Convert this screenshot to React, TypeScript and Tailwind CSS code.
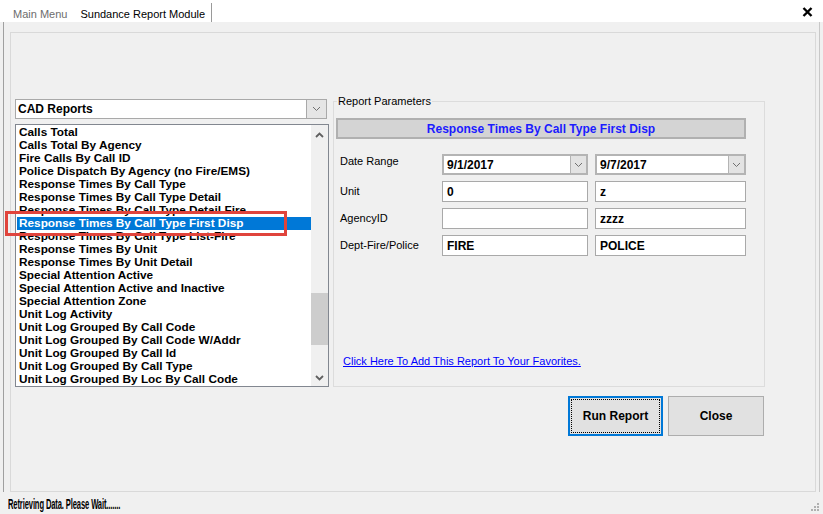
import React from 'react';

const reports = [
  'Calls Total',
  'Calls Total By Agency',
  'Fire Calls By Call ID',
  'Police Dispatch By Agency (no Fire/EMS)',
  'Response Times By Call Type',
  'Response Times By Call Type Detail',
  'Response Times By Call Type Detail Fire',
  'Response Times By Call Type First Disp',
  'Response Times By Call Type List-Fire',
  'Response Times By Unit',
  'Response Times By Unit Detail',
  'Special Attention Active',
  'Special Attention Active and Inactive',
  'Special Attention Zone',
  'Unit Log Activity',
  'Unit Log Grouped By Call Code',
  'Unit Log Grouped By Call Code W/Addr',
  'Unit Log Grouped By Call Id',
  'Unit Log Grouped By Call Type',
  'Unit Log Grouped By Loc By Call Code',
];

const selected = 'Response Times By Call Type First Disp';

const Chevron: React.FC<{ up?: boolean; bold?: boolean }> = ({ up, bold }) => (
  <svg width="9" height="6" viewBox="0 0 9 6">
    <path
      d={up ? 'M1 5 L4.5 1.5 L8 5' : 'M1 1 L4.5 4.5 L8 1'}
      fill="none"
      stroke={bold ? '#606060' : '#707070'}
      strokeWidth={bold ? 1.8 : 1}
    />
  </svg>
);

const TextBox: React.FC<{ value?: string; w: string }> = ({ value, w }) => (
  <div className={`${w} h-[21px] bg-white border border-[#a9a9a9] flex items-center pl-[4px] text-[12px] font-bold text-black`}>
    {value}
  </div>
);

const DateBox: React.FC<{ value: string; w: string }> = ({ value, w }) => (
  <div className={`${w} h-[21px] bg-white border-2 border-[#b4b4b4] flex items-center text-[12px] font-bold text-black`}>
    <span className="pl-[3px] flex-1">{value}</span>
    <div className="w-[16px] h-full bg-[#e3e3e3] border-l border-[#b4b4b4] flex items-center justify-center">
      <Chevron />
    </div>
  </div>
);

const Row: React.FC<{ label: string; shift?: boolean; children: React.ReactNode }> = ({ label, shift, children }) => (
  <div className="flex items-center h-[21px]">
    <div className={`w-[102px] text-[11px] text-black ${shift ? '-mt-[7px]' : ''}`}>{label}</div>
    <div className="flex gap-[7px]">{children}</div>
  </div>
);

export default function App() {
  return (
    <div
      className="w-[823px] h-[514px] bg-[#f0f0f0] flex flex-col overflow-hidden text-black"
      style={{ fontFamily: '"Liberation Sans", Arial, sans-serif' }}
    >
      {/* tab strip */}
      <div className="h-[22px] bg-white flex items-stretch shrink-0">
        <div className="pl-[13px] pt-[6px] text-[11px] text-[#6d6d6d]">Main Menu</div>
        <div className="ml-[7px] pl-[6px] pr-[6px] mt-[3px] pt-[3px] text-[11px] text-black border-r border-[#9a9a9a]">
          Sundance Report Module
        </div>
        <div className="ml-auto pr-[10px] pt-[7px]">
          <svg width="11" height="10" viewBox="0 0 11 10">
            <path d="M1.5 1 L9.5 9 M9.5 1 L1.5 9" stroke="#000" strokeWidth="2.4" />
          </svg>
        </div>
      </div>

      {/* body */}
      <div className="h-[470px] w-[817px] ml-[3px] border-l border-r border-[#c8c8c8] border-l-[#a0a0a0] flex flex-col shrink-0">
        <div className="ml-[6px] mt-[10px] w-[806px] h-[460px] border border-[#d9d9d9] pt-[66px] pl-[4px] flex gap-[4px]">
          {/* left column */}
          <div className="w-[314px] flex flex-col">
            <div className="w-[312px] h-[20px] bg-white border border-[#a9a9a9] flex items-center">
              <span className="pl-[2px] flex-1 text-[12px] font-bold">CAD Reports</span>
              <div className="w-[20px] h-full bg-[#e5e5e5] border-l border-[#a9a9a9] flex items-center justify-center">
                <Chevron />
              </div>
            </div>
            <div className="mt-[5px] h-[263px] w-[314px] bg-white border border-[#828790] flex">
              <div className="flex-1 pt-[1px] pl-[1px]">
                {reports.map((r) => (
                  <div
                    key={r}
                    className={`h-[13px] leading-[13px] pl-[2px] text-[11.8px] font-bold whitespace-nowrap overflow-hidden ${
                      r === selected ? 'bg-[#0078d7] text-white' : 'text-black'
                    }`}
                  >
                    {r}
                  </div>
                ))}
              </div>
              <div className="w-[17px] bg-[#f0f0f0] flex flex-col items-center">
                <div className="h-[17px] flex items-center justify-center mt-[1px]">
                  <Chevron up bold />
                </div>
                <div className="flex-1 w-full flex flex-col">
                  <div className="h-[150px]" />
                  <div className="h-[52px] w-full bg-[#cdcdcd]" />
                </div>
                <div className="h-[17px] flex items-center justify-center">
                  <Chevron bold />
                </div>
              </div>
            </div>
          </div>

          {/* right column */}
          <div className="w-[432px] flex flex-col">
            <div className="mt-[2px] h-[286px] border border-[#dcdcdc] relative flex flex-col">
              <span className="absolute left-[3px] -top-[7px] px-[1px] bg-[#f0f0f0] text-[11px] leading-[13px]">
                Report Parameters
              </span>
              <div className="ml-[2px] mt-[16px] w-[410px] h-[21px] bg-[#d4d4d4] border-2 border-[#b0b0b0] flex items-center justify-center text-[12px] font-bold text-[#1c1cff]">
                Response Times By Call Type First Disp
              </div>
              <div className="mt-[15px] ml-[6px] flex flex-col gap-[6px]">
                <Row label="Date Range" shift>
                  <DateBox value="9/1/2017" w="w-[146px]" />
                  <DateBox value="9/7/2017" w="w-[151px]" />
                </Row>
                <Row label="Unit">
                  <TextBox value="0" w="w-[146px]" />
                  <TextBox value="z" w="w-[151px]" />
                </Row>
                <Row label="AgencyID">
                  <TextBox w="w-[146px]" />
                  <TextBox value="zzzz" w="w-[151px]" />
                </Row>
                <Row label="Dept-Fire/Police">
                  <TextBox value="FIRE" w="w-[146px]" />
                  <TextBox value="POLICE" w="w-[151px]" />
                </Row>
              </div>
              <a className="mt-[97px] ml-[9px] text-[11px] text-[#0000ff] underline cursor-pointer w-fit">
                Click Here To Add This Report To Your Favorites.
              </a>
            </div>
            <div className="mt-[9px] flex justify-end gap-[5px] pr-[1px]">
              <button className="w-[95px] h-[40px] bg-[#e1e1e1] border-2 border-[#0078d7] p-[1px]">
                <div className="w-full h-full border border-dotted border-black flex items-center justify-center text-[12px] font-bold">
                  Run Report
                </div>
              </button>
              <button className="w-[96px] h-[40px] bg-[#e1e1e1] border border-[#adadad] flex items-center justify-center text-[12px] font-bold">
                Close
              </button>
            </div>
          </div>
        </div>
      </div>

      {/* status bar */}
      <div className="h-[22px] flex items-center pl-[8px] shrink-0">
        <span className="text-[14px] font-bold tracking-[-0.2px] origin-left scale-x-[0.54] whitespace-nowrap w-[112px] mt-[2px]">
          Retrieving Data. Please Wait.......
        </span>
        <svg className="ml-auto mr-[3px] mt-[8px]" width="10" height="10" viewBox="0 0 10 10">
          <rect x="7" y="1" width="2" height="2" fill="#b0b0b0" />
          <rect x="4" y="4" width="2" height="2" fill="#b0b0b0" />
          <rect x="7" y="4" width="2" height="2" fill="#b0b0b0" />
          <rect x="1" y="7" width="2" height="2" fill="#b0b0b0" />
          <rect x="4" y="7" width="2" height="2" fill="#b0b0b0" />
          <rect x="7" y="7" width="2" height="2" fill="#b0b0b0" />
        </svg>
      </div>

      {/* annotation box around selected report */}
      <div className="absolute left-[5px] top-[211px] w-[282px] h-[25px] border-[3px] border-[#e0443c] pointer-events-none" />
    </div>
  );
}
